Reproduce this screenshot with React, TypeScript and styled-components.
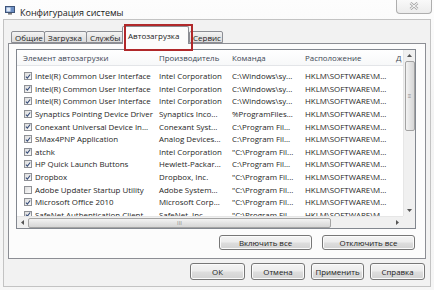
import React from 'react';
import styled, { createGlobalStyle } from 'styled-components';

const GlobalStyle = createGlobalStyle`
  html, body {
    margin: 0;
    padding: 0;
    background: #f7f7f7;
  }
  body {
    font-family: 'Open Sans', 'Noto Sans', sans-serif;
    font-size: 7.9px;
    color: #222;
  }
`;

const Window = styled.div`
  width: 434px;
  height: 290px;
  background: linear-gradient(#fdfdfd, #f3f3f3 40%, #f6f6f6);
  display: flex;
  flex-direction: column;
  overflow: hidden;
`;

const TitleBar = styled.div`
  height: 19px;
  display: flex;
  align-items: flex-start;
  padding-left: 5px;
  box-sizing: border-box;
`;

const TitleIcon = styled.svg`
  margin-top: 6px;
  width: 10px;
  height: 9px;
`;

const TitleText = styled.span`
  margin-left: 5px;
  margin-top: 6px;
  font-size: 9px;
  color: #1a1a1a;
`;

const CloseButton = styled.div`
  margin-left: auto;
  margin-right: 2px;
  margin-top: -2px;
  width: 36px;
  height: 16px;
  border: 1px solid #aeaeae;
  border-top: none;
  border-radius: 0 0 4px 4px;
  background: linear-gradient(#fbfbfb, #ececec);
  display: flex;
  align-items: center;
  justify-content: center;
  box-sizing: border-box;
`;

const Client = styled.div`
  margin: 0 3px;
  flex: 1;
  margin-bottom: 3px;
  border: 1px solid #c3c3c3;
  background: #f2f2f2;
  display: flex;
  flex-direction: column;
  padding: 6px 0 0 4px;
  box-sizing: border-box;
`;

const TabStrip = styled.div`
  position: relative;
  display: flex;
  align-items: flex-end;
  height: 17px;
  padding-left: 3px;
  z-index: 1;
`;

const Tab = styled.div<{ $w: number; $active?: boolean }>`
  width: ${p => p.$w}px;
  height: ${p => (p.$active ? 18 : 12)}px;
  margin-bottom: ${p => (p.$active ? -1 : 0)}px;
  margin-left: ${p => (p.$active ? -3 : -1)}px;
  margin-right: ${p => (p.$active ? 1 : 0)}px;
  box-sizing: border-box;
  border: 1px solid #8c8e94;
  border-bottom: ${p => (p.$active ? 'none' : '1px solid #8c8e94')};
  border-radius: 2px 2px 0 0;
  background: ${p => (p.$active ? '#fcfcfc' : 'linear-gradient(#f4f4f4, #e6e6e6 50%, #dcdcdc)')};
  display: flex;
  align-items: ${p => (p.$active ? 'flex-start' : 'center')};
  padding: ${p => (p.$active ? '3px 0 0 5px' : '0 0 0 3px')};
  font-size: 8px;
  color: #222;
  white-space: nowrap;
  overflow: hidden;
  position: relative;
  z-index: ${p => (p.$active ? 2 : 1)};
  &:first-child {
    margin-left: 0;
  }
`;

const Highlight = styled.div`
  position: absolute;
  left: 116px;
  top: -2px;
  width: 69px;
  height: 27px;
  border: 2px solid #b0282a;
  box-sizing: border-box;
  z-index: 3;
  pointer-events: none;
`;

const TabPanel = styled.div`
  width: 418px;
  height: 216px;
  box-sizing: border-box;
  border: 1px solid #8c8e94;
  background: #fcfcfc;
  padding: 5px 0 0 7px;
  display: flex;
  flex-direction: column;
`;

const List = styled.div`
  width: 400px;
  height: 180px;
  box-sizing: border-box;
  border: 1px solid #82878f;
  background: #fff;
  display: grid;
  grid-template-columns: 1fr 12px;
  grid-template-rows: 1fr 12px;
`;

const ListContent = styled.div`
  overflow: hidden;
`;

const cols = '139px 73px 73px 91px 1fr';

const HeaderRow = styled.div`
  display: grid;
  grid-template-columns: ${cols};
  height: 15px;
  align-items: center;
  background: linear-gradient(#ffffff, #f7f8f9);
  border-bottom: 1px solid #e3e5e8;
  margin-bottom: 4px;
  color: #3c4654;
`;

const HeaderCell = styled.div<{ $pad?: number }>`
  padding-left: ${p => p.$pad ?? 3}px;
  white-space: nowrap;
  overflow: hidden;
`;

const Row = styled.div`
  display: grid;
  grid-template-columns: ${cols};
  height: 12.6px;
  align-items: center;
  color: #262626;
`;

const Cell = styled.div`
  padding-left: 3px;
  white-space: nowrap;
  overflow: hidden;
`;

const NameCell = styled.div`
  display: flex;
  align-items: center;
  gap: 3px;
  padding-left: 7px;
  white-space: nowrap;
  overflow: hidden;
`;

const Check = styled.div`
  width: 8px;
  height: 8px;
  flex: none;
  box-sizing: border-box;
  border: 1px solid #8f9196;
  background: linear-gradient(135deg, #dcdcdc, #fbfbfb);
  display: flex;
  align-items: center;
  justify-content: center;
`;

const VScroll = styled.div`
  background: #f0f0f0;
  border-left: 1px solid #e6e6e6;
  display: flex;
  flex-direction: column;
  align-items: center;
`;

const HScroll = styled.div`
  background: #f0f0f0;
  border-top: 1px solid #e6e6e6;
  display: flex;
  align-items: center;
`;

const Corner = styled.div`
  background: #f0f0f0;
`;

const Arrow = styled.div`
  width: 11px;
  height: 11px;
  flex: none;
  display: flex;
  align-items: center;
  justify-content: center;
`;

const Thumb = styled.div<{ $horizontal?: boolean }>`
  box-sizing: border-box;
  border: 1px solid #a3a3a3;
  border-radius: 2px;
  background: ${p =>
    p.$horizontal ? 'linear-gradient(#f3f3f3, #e4e4e4 50%, #d6d6d6)' : 'linear-gradient(90deg, #f3f3f3, #e4e4e4 50%, #d6d6d6)'};
  display: flex;
  align-items: center;
  justify-content: center;
  color: #8a8a8a;
  font-size: 6px;
  ${p => (p.$horizontal ? 'height: 10px; width: 303px;' : 'width: 10px; height: 70px;')}
`;

const Spacer = styled.div`
  flex: 1;
`;

const ButtonRow = styled.div<{ $gap: number }>`
  display: flex;
  justify-content: flex-end;
  gap: ${p => p.$gap}px;
`;

const PanelButtons = styled(ButtonRow)`
  margin-top: 6px;
  padding-right: 10px;
`;

const DialogButtons = styled(ButtonRow)`
  margin-top: 4px;
  padding-right: 5px;
`;

const Button = styled.div<{ $w: number; $h: number }>`
  width: ${p => p.$w}px;
  height: ${p => p.$h}px;
  box-sizing: border-box;
  border: 1px solid #777;
  border-radius: 3px;
  background: linear-gradient(#f4f4f4, #ececec 48%, #dedede 52%, #d2d2d2);
  box-shadow: inset 0 0 0 1px #fbfbfb;
  display: flex;
  align-items: center;
  justify-content: center;
  font-size: 7.9px;
  color: #222;
`;

const Tick = () => (
  <svg width="7" height="7" viewBox="0 0 7 7">
    <path d="M1 3.6 L2.8 5.4 L6 1.2" fill="none" stroke="#3a4f7a" strokeWidth="1.3" />
  </svg>
);

type Item = { name: string; maker: string; cmd: string; on: boolean };

const items: Item[] = [
  { name: 'Intel(R) Common User Interface', maker: 'Intel Corporation', cmd: 'C:\\Windows\\sy...', on: true },
  { name: 'Intel(R) Common User Interface', maker: 'Intel Corporation', cmd: 'C:\\Windows\\sy...', on: true },
  { name: 'Intel(R) Common User Interface', maker: 'Intel Corporation', cmd: 'C:\\Windows\\sy...', on: true },
  { name: 'Synaptics Pointing Device Driver', maker: 'Synaptics Inco...', cmd: '%ProgramFiles...', on: true },
  { name: 'Conexant Universal Device In...', maker: 'Conexant Syst...', cmd: 'C:\\Program Fil...', on: true },
  { name: 'SMax4PNP Application', maker: 'Analog Devices...', cmd: 'C:\\Program Fil...', on: true },
  { name: 'atchk', maker: 'Intel Corporation', cmd: '"C:\\Program Fil...', on: true },
  { name: 'HP Quick Launch Buttons', maker: 'Hewlett-Packar...', cmd: 'C:\\Program Fil...', on: true },
  { name: 'Dropbox', maker: 'Dropbox, Inc.', cmd: '"C:\\Program Fil...', on: true },
  { name: 'Adobe Updater Startup Utility', maker: 'Adobe System...', cmd: '"C:\\Program Fil...', on: false },
  { name: 'Microsoft Office 2010', maker: 'Microsoft Corp...', cmd: '"C:\\Program Fil...', on: true },
  { name: 'SafeNet Authentication Client', maker: 'SafeNet, Inc.', cmd: '"C:\\Program Fil...', on: true },
];

const App = () => {
  return (
    <>
      <GlobalStyle />
      <Window>
        <TitleBar>
          <TitleIcon viewBox="0 0 10 9">
            <rect x="0.5" y="0.5" width="9" height="6" fill="#6c8fc4" stroke="#3d5378" />
            <rect x="1.5" y="1.5" width="4" height="4" fill="#dfe9f6" />
            <rect x="3" y="7" width="4" height="1.6" fill="#7d7d7d" />
          </TitleIcon>
          <TitleText>Конфигурация системы</TitleText>
          <CloseButton>
            <svg width="10" height="8" viewBox="0 0 10 8">
              <path d="M1.5 1 L8.5 7 M8.5 1 L1.5 7" stroke="#9a9a9a" strokeWidth="2.6" />
              <path d="M1.5 1 L8.5 7 M8.5 1 L1.5 7" stroke="#f4f4f4" strokeWidth="1.1" />
            </svg>
          </CloseButton>
        </TitleBar>
        <Client>
          <TabStrip>
            <Tab $w={34}>Общие</Tab>
            <Tab $w={43}>Загрузка</Tab>
            <Tab $w={39}>Службы</Tab>
            <Tab $w={67} $active>Автозагрузка</Tab>
            <Tab $w={34}>Сервис</Tab>
            <Highlight />
          </TabStrip>
          <TabPanel>
            <List>
              <ListContent>
                <HeaderRow>
                  <HeaderCell $pad={6}>Элемент автозагрузки</HeaderCell>
                  <HeaderCell>Производитель</HeaderCell>
                  <HeaderCell>Команда</HeaderCell>
                  <HeaderCell>Расположение</HeaderCell>
                  <HeaderCell>Д</HeaderCell>
                </HeaderRow>
                {items.map((it, i) => (
                  <Row key={i}>
                    <NameCell>
                      <Check>{it.on && <Tick />}</Check>
                      {it.name}
                    </NameCell>
                    <Cell>{it.maker}</Cell>
                    <Cell>{it.cmd}</Cell>
                    <Cell>HKLM\SOFTWARE\M...</Cell>
                    <Cell />
                  </Row>
                ))}
              </ListContent>
              <VScroll>
                <Arrow>
                  <svg width="5" height="3" viewBox="0 0 5 3">
                    <path d="M0 3 L2.5 0 L5 3 Z" fill="#555" />
                  </svg>
                </Arrow>
                <Thumb>≡</Thumb>
                <Spacer />
                <Arrow>
                  <svg width="5" height="3" viewBox="0 0 5 3">
                    <path d="M0 0 L2.5 3 L5 0 Z" fill="#555" />
                  </svg>
                </Arrow>
              </VScroll>
              <HScroll>
                <Arrow>
                  <svg width="3" height="5" viewBox="0 0 3 5">
                    <path d="M3 0 L0 2.5 L3 5 Z" fill="#555" />
                  </svg>
                </Arrow>
                <Thumb $horizontal>III</Thumb>
                <Spacer />
                <Arrow>
                  <svg width="3" height="5" viewBox="0 0 3 5">
                    <path d="M0 0 L3 2.5 L0 5 Z" fill="#555" />
                  </svg>
                </Arrow>
              </HScroll>
              <Corner />
            </List>
            <PanelButtons $gap={10}>
              <Button $w={93} $h={15}>Включить все</Button>
              <Button $w={93} $h={15}>Отключить все</Button>
            </PanelButtons>
          </TabPanel>
          <DialogButtons $gap={6}>
            <Button $w={55} $h={17}>ОК</Button>
            <Button $w={54} $h={17}>Отмена</Button>
            <Button $w={53} $h={17}>Применить</Button>
            <Button $w={55} $h={17}>Справка</Button>
          </DialogButtons>
        </Client>
      </Window>
    </>
  );
};

export default App;
